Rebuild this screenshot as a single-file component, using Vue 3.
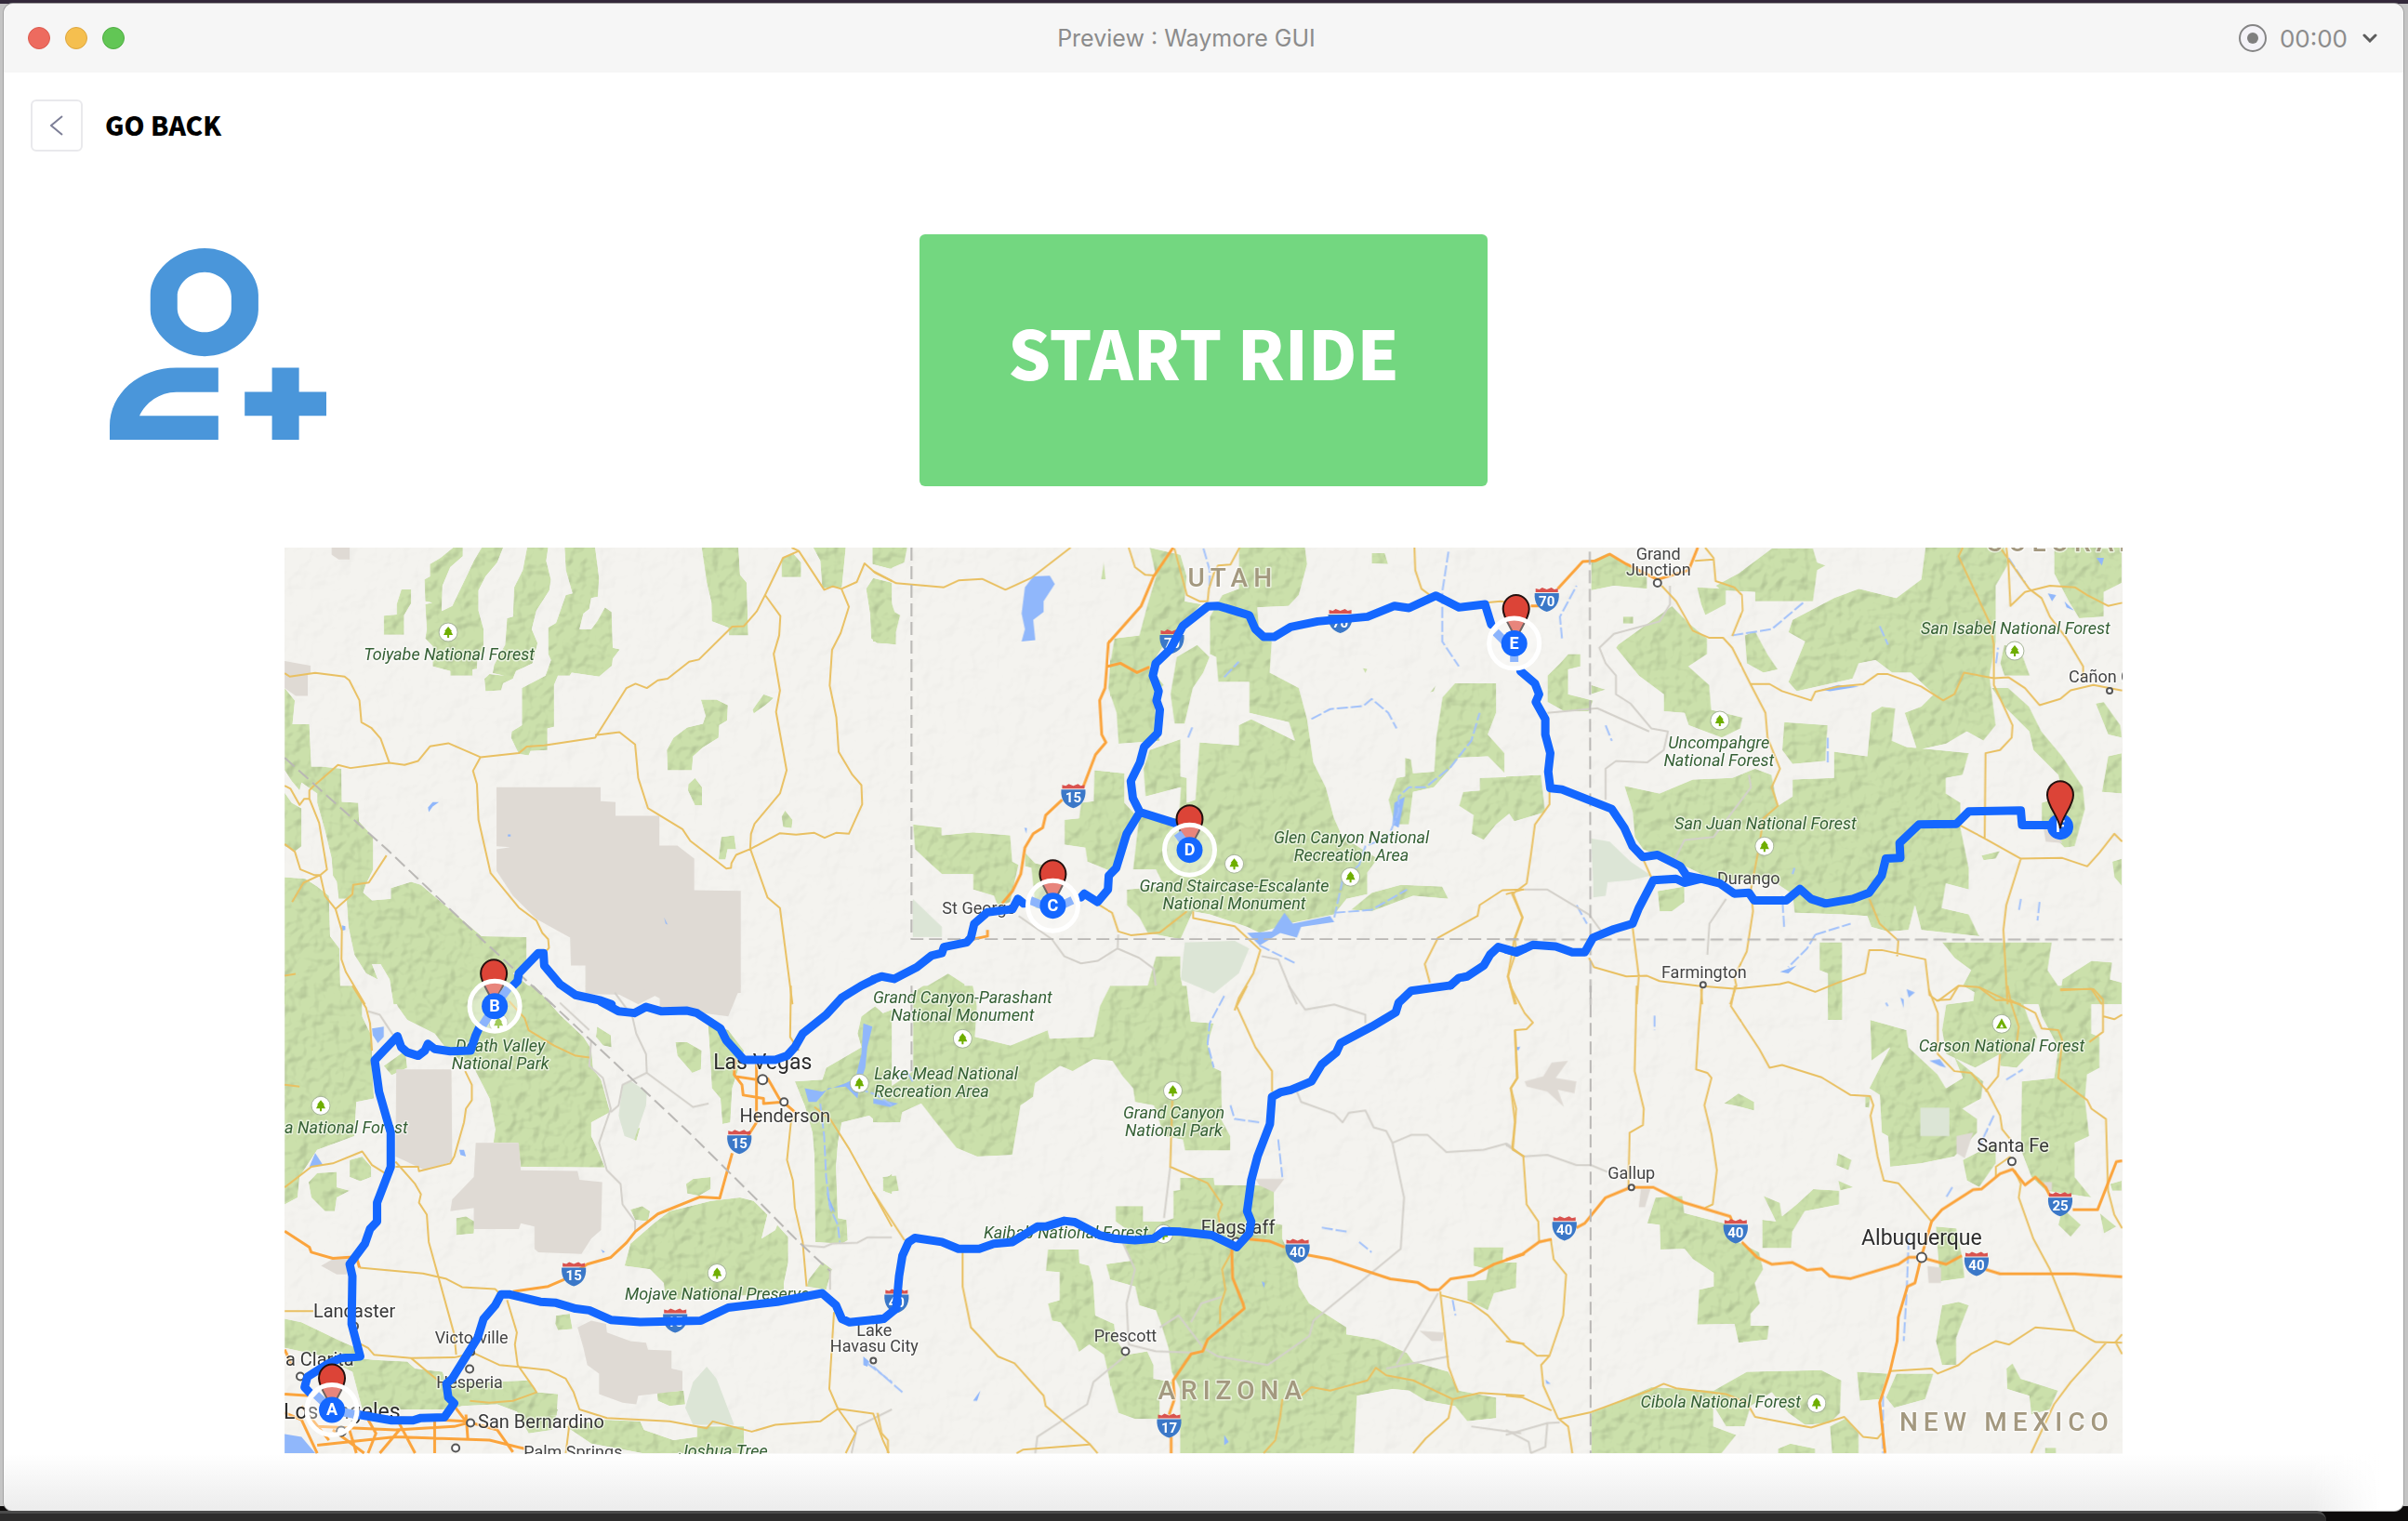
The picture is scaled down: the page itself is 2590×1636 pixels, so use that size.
<script setup>
// Vector tiles of the base map: origin (x, y), scale (sx, sy) and path data per layer.
const A = 1 / 2.3758
const B = 1 / 2.24
const C = 1 / 3
const D = 1 / 2.7222

const tiles = [
  {
    x: 300, y: 580, sx: A, sy: C,
    park: 'M270 247L303 243 303 210 315 162 340 162 340 207 322 245 322 308 270 308ZM415 60L447 27 472 27 472 55 440 90 420 150 418 232 445 215 482 118 500 70 520 27 575 27 560 75 530 120 512 165 512 230 525 290 525 370 510 380 508 418 497 420 497 440 440 440 440 425 395 410 395 345 376 320 380 290 376 210 394 205 376 200 374 130 388 120 388 80ZM636 27L690 27 685 70 697 130 693 165 660 230 648 290 663 335 650 400 608 425 600 450 575 465 570 487 530 490 527 450 540 435 578 440 548 432 552 405 580 340 585 255 600 250 603 155 625 100ZM732 27L810 27 820 125 817 185 800 190 795 225 780 240 770 290 800 290 815 265 835 220 852 235 855 350 873 355 855 385 853 408 820 443 750 430 745 440 715 440 705 470 705 605 688 610 688 680 645 683 640 697 615 693 595 640 597 620 623 600 623 480 683 440 697 390 690 370 690 285 710 270 735 180 752 175 735 100ZM1082 27L1176 27 1180 115 1197 140 1201 310 1152 310 1150 285 1108 265 1107 205 1095 140ZM1286 60L1315 45 1336 75 1336 122 1286 122ZM1367 27L1450 27 1440 155 1390 158 1385 70ZM1518 27L1568 27 1568 95 1518 80ZM1502 160L1520 125 1568 140 1568 337 1530 335 1515 320 1512 240ZM1080 517L1120 517 1149 535 1147 585 1127 600 1125 640 1085 672 1060 700 1057 745 995 745 993 680 1010 640 1045 607 1085 595 1092 570ZM1212 550L1240 500 1266 512 1245 535 1215 562ZM1048 790L1065 770 1083 800 1083 858 1065 858 1047 810ZM1286 895L1295 875 1314 905 1312 932 1290 928ZM1132 960L1165 955 1170 1000 1148 1000 1143 1033 1125 1033ZM17 480L43 520 37 597 80 597 85 733 110 733 162 740 163 847 205 850 207 910 243 960 243 1065 225 1112 212 1160 155 1160 150 1105 140 1085 137 1030 120 940 100 850 100 820 60 785 55 810 35 780 17 745ZM17 818L35 850 60 868 60 990 45 1005 17 990ZM17 1090L70 1095 100 1120 130 1150 133 1280 157 1320 160 1500 17 1500ZM192 1110L240 1165 288 1160 288 1125 340 1105 365 1115 520 1280 635 1283 635 1380 600 1400 700 1500 295 1500 285 1420 262 1370 240 1370 255 1420 225 1400 195 1340 180 1250 175 1160Z',
    base: 'M558 800L824 800 824 845 862 848 862 892 974 892 974 988 1020 988 1063 1030 1063 1132 1182 1134 1182 1463 1152 1465 1152 1510 975 1510 975 1465 920 1500 870 1468 785 1465 785 1375 748 1375 746 1285 660 1225 600 1150 558 1070 558 1000 593 993 558 990ZM17 393L83 408 83 435 76 435 76 505 45 505 17 480ZM137 27L183 27 183 65 155 65 137 50Z',
    pale: '',
    lake: 'M385 880L383 865 395 848 411 848 395 862ZM986 1220L995 1243 990 1240ZM163 1245L172 1248 172 1260 163 1262ZM587 952H594V959H587Z',
    river: '',
    minor: '',
    road: 'M17 432L30 443 95 431 170 443 182 455 208 520 213 590 238 608 262 643 284 720M90 797L153 728 185 738 284 721 323 728 358 715 388 668 435 658 517 703 615 690 635 669 680 665 810 640 890 480 913 466 942 480 970 455 995 450 1050 395 1075 388 1160 282 1190 280 1223 232 1244 180 1290 60 1330 38 1312 27M517 703L498 747 508 790 512 905 543 1077 615 1188 660 1230 675 1270 690 1290 692 1318 680 1335M810 632L872 622 912 662 920 770 945 868 1033 935 1053 973 1145 1062 1157 1060 1158 1045 1170 1018 1208 998 1282 948 1323 953 1370 947 1396 963 1425 947 1458 950 1492 855 1490 793 1467 760 1432 686 1426 575 1409 472 1415 357 1437 303 1458 218 1439 160 1417 152 1395 163 1330 38M1439 160L1478 138 1498 78 1525 108 1568 135M1244 180L1283 248 1280 310 1266 370 1282 488 1272 557 1299 745 1282 820 1217 918 1208 950 1206 998 1250 1155 1282 1190 1314 1500M17 795L32 805 55 857 67 837 80 837 80 810 90 797M80 837L105 915 125 1065 108 1083 120 1150 147 1193 163 1262 162 1355 173 1395 222 1500M17 983L43 1008 57 1065 92 1083 108 1083 65 1108 36 1170M147 1193L190 1145 192 1115 232 1107 277 1020M17 1408L45 1402',
    highway: '',
    border: 'M17 705L278 1000 520 1290 700 1500',
    route: 'M852 1500L825 1488 760 1470 720 1435 680 1375 678 1335 665 1335 615 1400 612 1425 600 1440',
  },
  {
    x: 300, y: 1060, sx: A, sy: D,
    park: 'M17 0L190 0 215 40 215 90 240 150 240 230 245 330 200 340 195 440 160 455 100 480 55 560 50 620 17 640ZM270 235L325 190 330 240 290 262ZM78 575L100 548 150 545 150 590 183 600 150 620 145 660 120 660 85 620ZM183 510L215 500 238 530 238 560 210 572 183 560ZM290 0L655 0 720 85 780 150 800 185 805 245 825 275 848 370 800 400 800 440 820 490 835 532 620 530 612 460 550 460 555 420 540 330 500 240 440 200 400 140 330 100 305 60ZM455 680L480 675 502 690 500 725 455 730ZM815 120L850 145 852 180 830 175 812 150ZM1015 165L1045 165 1082 190 1080 245 1058 255 1020 205ZM1098 105L1150 130 1190 190 1180 230 1160 300 1155 400 1135 405 1130 330 1108 300 1105 230ZM1568 70L1545 80 1525 60 1490 90 1480 140 1490 180 1400 240 1390 275 1320 280 1345 350 1365 430 1370 500 1372 750 1440 755 1455 745 1452 685 1430 680 1425 530 1430 460 1440 400 1510 380 1530 400 1568 400ZM885 430L925 415 915 455ZM1042 580L1060 565 1105 560 1105 595 1075 615 1045 608ZM900 655L930 645 950 660 945 690 912 685ZM1105 630L1180 620 1215 630 1250 670 1235 740 1270 715 1275 700 1303 735 1303 810 1292 870 1292 900 990 920 985 870 950 830 885 820 900 755 960 695 1000 660 1070 640ZM1355 860L1390 808 1415 830 1400 890 1350 880ZM710 965L745 960 752 1005 715 1008 708 990ZM968 1190L1036 1185 1040 1225 1000 1230 970 1215ZM1545 570L1568 550 1568 610 1545 600ZM17 975L60 985 160 1040 200 1060 205 1090 245 1095 330 1100 350 1120 420 1130 430 1160 470 1160 540 1160 640 1155 662 1190 715 1195 712 1258 640 1260 560 1225 470 1230 440 1240 320 1240 215 1240 190 1130 100 1080 17 1060ZM735 1290L830 1270 925 1275 935 1300 1010 1330 1070 1320 1070 1290 1190 1290 1190 1368 930 1368 800 1340ZM600 1225L680 1235 715 1240 700 1300 640 1310Z',
    base: 'M302 245L443 245 445 515 375 540 320 510 300 500ZM505 460L615 460 620 540 765 542 770 568 828 575 825 715 800 740 775 785 665 780 655 770 655 705 620 695 615 712 500 712 500 650 440 660 445 625 500 560ZM765 1000L800 980 838 990 840 1015 900 1040 940 1045 945 1065 1005 1068 1005 1120 1033 1128 1033 1185 920 1200 915 1225 880 1220 820 1195 820 1135 790 1110 780 1060ZM785 0L1182 0 1150 90 1050 75 980 40 930 10 920 25 790 25ZM110 820L140 800 180 800 175 845 150 845Z',
    pale: 'M880 290L900 278 942 310 940 350 910 450 885 440 870 380ZM1040 1235L1060 1160 1095 1115 1120 1150 1165 1285 1060 1285Z',
    lake: 'M240 125L270 120 270 150 255 168 242 145ZM17 1312L60 1320 95 1368 17 1368ZM1495 110L1518 120 1505 180 1500 240 1485 290 1480 330 1450 295 1405 300 1375 340 1355 340 1345 300 1390 310 1450 285 1475 270 1490 200ZM1400 600L1424 665 1408 645ZM80 530L95 490 115 525ZM463 480L475 480 480 500 466 495ZM825 772L835 778 830 782ZM1495 1085L1510 1100 1505 1115 1495 1110Z',
    river: 'M1480 300L1530 320 1568 350M1385 345L1395 440 1400 560 1410 650 1430 700 1435 750M1505 1105L1568 1160',
    minor: 'M230 75L260 85 280 120 300 155M800 160L795 235 830 270 850 360 820 460 840 540 875 580 880 640 912 690 912 720M720 50L795 130M860 20L905 90 915 140 940 200 942 255 1060 355 1100 345M942 255L880 290 870 350 850 370M1340 760L1395 765 1415 755 1480 752 1505 737 1568 737M1568 1240L1480 1290 1465 1368M1410 830L1410 890',
    road: 'M190 0L225 65 235 110 240 190M590 45L630 95 640 130 705 175 760 205 795 210M478 250L495 290 495 335 480 360 475 400 450 500 440 520 360 543 358 530 300 530M17 590L85 530 140 520 215 485 240 525 275 550M17 290L55 295M300 515L350 580 365 610 360 635 380 670 385 750 450 1020 455 1080M208 825L370 842 430 858 470 882 555 888 565 900M585 920L610 1015 605 1050 612 1110 655 1180 660 1190 600 1215 540 1220 490 1215M17 952L90 952M205 1045L230 1060 245 1080 340 1090 450 1088 500 1075 565 1110 610 1115 690 1125 735 1150 755 1190 770 1240 840 1265 1000 1275 1095 1295 1110 1275 1210 1305 1270 1285 1385 1275 1430 1238 1520 1252 1545 1330 1560 1368M340 1090L435 1180M1420 955L1408 1180 1430 1238 1475 1310 1450 1368M1310 0L1308 150 1330 190M1330 370L1310 400 1300 510 1315 570 1320 650 1340 750 1350 880M1370 355L1410 390 1460 480 1568 705M735 1368L745 1275',
    highway: 'M17 718L80 765 85 780 140 798 200 793 208 825M1160 490L1128 622 1078 618 970 668 912 720 890 752 850 795 790 815 730 860 690 880 600 895M1168 215L1165 260 1185 290 1188 320 1240 330 1240 345 1290 340M1222 225L1222 400 1200 440M1165 265L1222 275M1250 270L1280 330 1320 370M17 1195L80 1200M17 1065L35 1110M230 1260L480 1275 560 1300 600 1365M100 1290L300 1300 450 1290 500 1275M180 1290L200 1368M230 1368L250 1310 230 1270M300 1260L350 1368M400 1270L400 1368M140 1300L220 1368M260 1368L310 1300M100 1345L300 1320 540 1330 630 1355M450 1230L480 1275M480 1255L485 1330M17 1250L60 1270 100 1368M60 1230L130 1330',
    border: 'M650 0L1050 430 1200 600 1330 750 1410 835',
    route: 'M825 47L870 75 910 80 940 62 980 75 1045 73 1070 80 1130 125 1145 160 1190 217 1270 217 1300 205 1320 180 1340 140 1400 85 1440 35 1490 0 1522 -18M515 120L505 145 492 190 440 192 400 185 383 170 375 190 358 205 330 195 315 180 305 148 270 190 247 218 258 310 288 430 288 530 253 635 253 690 235 712 222 755 183 815 190 850 188 990 210 1085 160 1090 130 1105 75 1145 68 1175 82 1192M205 1255L290 1272 345 1272 365 1265 425 1263 450 1222 435 1205 430 1165 445 1150 510 1030 525 975 555 935 570 903 590 903 670 925 710 928 760 945 795 950 850 978 925 984 1080 980 1150 942 1275 925 1390 900 1425 935 1440 975 1460 985 1545 975',
  },
  {
    x: 940, y: 580, sx: B, sy: C,
    park: 'M0 27L82 27 75 75 40 95 0 80ZM0 125L30 150 52 235 65 245 55 300 55 340 0 330ZM665 27L740 50 755 120 750 200 790 210 700 340 665 415 700 470 675 500 680 560 690 650 590 660 585 560 565 480 570 400 580 320 640 310 660 210 680 120ZM880 27L1040 27 1045 80 1025 180 1000 215 925 220 930 300 960 330 955 430 1025 480 1045 580 1060 720 1090 800 1110 900 1130 960 1190 1010 1215 1030 1190 1075 1190 1145 1140 1160 1110 1210 1000 1240 930 1270 900 1250 810 1210 770 1200 740 1290 660 1270 640 1220 610 1180 610 1130 700 1120 680 1065 625 1065 640 890 735 900 740 800 655 830 650 740 665 680 740 645 740 765 755 770 755 850 775 840 785 655 880 665 880 600 910 580 1015 650 1000 590 905 560 905 460 830 460 825 380 810 370 810 250 840 180 880 160ZM730 380L780 340 810 380 795 430 770 480 750 595 725 595 715 500ZM532 745L605 755 605 850 640 900 600 1010 570 1070 515 1040 510 995 460 985 460 905 495 900 500 850 530 845ZM95 920L165 930 165 955 240 945 330 955 335 1040 350 1050 330 1170 300 1185 290 1150 240 1130 240 1080 165 1080 140 1050 100 1000ZM365 1010L390 1045 440 1060 440 1200 390 1190 380 1060 365 1055ZM1200 45L1232 45 1240 80 1200 78ZM1400 465L1500 465 1500 560 1480 630 1520 690 1520 755 1480 700 1410 705 1390 740 1350 800 1300 815 1290 920 1255 920 1240 840 1260 770 1280 765 1280 705 1295 710 1300 755 1350 750 1355 640 1370 510ZM1460 770L1568 765 1568 880 1545 870 1500 920 1470 970 1440 950 1445 890 1410 860 1420 815 1460 810ZM1200 1140L1270 1115 1370 1120 1385 1160 1300 1150 1200 1200 1150 1195ZM680 1345L740 1345 740 1410 755 1510 550 1510 570 1445 660 1440ZM130 1440L180 1400 220 1435 220 1460 160 1470ZM548 130L555 70 560 130ZM1340 495L1355 470 1350 490ZM1178 415L1190 418 1185 433Z',
    base: '',
    pale: 'M750 1300L870 1295 905 1320 880 1400 820 1465 740 1420ZM95 1160L165 1250 165 1283 95 1283Z',
    lake: 'M385 120L425 118 437 145 410 200 410 235 385 260 390 325 357 330 365 290 357 240 365 155ZM900 1270L960 1265 990 1205 1010 1240 1100 1215 1110 1235 1030 1250 1020 1285 980 1270 930 1310ZM1255 850L1280 830 1265 930 1250 920ZM364 930L370 932 368 950Z',
    river: 'M1110 1220L1130 1100 1170 1050 1185 990 1240 960 1265 880 1265 830 1290 800 1330 800 1390 735 1440 650 1460 560M1110 1205L1200 1195 1285 1130M845 445L880 395M758 640L770 600M1055 580L1100 548 1180 538 1200 515 1240 560 1260 610M1385 40L1370 170 1370 330 1410 410M795 30L810 100 810 150M930 1310L1020 1370',
    minor: 'M590 1275L588 1320 540 1360 500 1368 460 1345 430 1290 350 1215M588 1320L640 1350 675 1385 680 1440M935 1345L975 1355 1010 1470 1020 1500',
    road: 'M0 103L55 142 170 155 205 133 262 128 318 163 380 125 475 27M615 27L630 90 655 115 680 117M725 30L755 180 785 200 805 200 808 160 820 110 830 85 860 82 882 27M1303 27L1305 100 1320 160 1340 180M545 1180L575 1205 590 1265 620 1277 690 1268 755 1200M770 1200L770 1222 870 1248 932 1325 915 1400 880 1480 870 1520M1568 1130L1515 1132 1460 1180 1455 1215 1360 1285 1328 1370 1340 1430M1540 1140L1563 1220 1545 1290 1548 1330 1528 1410 1545 1500M1475 205L1510 200 1535 205',
    highway: 'M722 27L675 120 645 215 566 335 562 415 558 480 545 520 550 630 560 655 535 695 505 800M455 840L415 890 408 930 385 950 365 995 355 1080 335 1135 310 1175M565 410L595 400 635 430 665 412M275 1260L275 1280 240 1290',
    border: 'M92 27L92 1290L1568 1290',
    route: 'M0 1420L20 1410 50 1418 105 1380 140 1343 165 1335 170 1315 225 1300 235 1285 243 1240 275 1203 335 1193 348 1160 362 1175M500 1155L508 1143 540 1170 565 1130 567 1085 585 1060 610 950 642 880 625 835 620 780 642 720 652 670 685 625 690 550 682 520 687 490 673 440 680 400 715 355 745 280 805 217 830 215 880 235 905 245 920 290 940 315 965 315 1005 283 1070 265 1190 250 1255 215 1290 222 1355 182 1410 220 1473 210 1488 275M642 880L725 915M1390 1439L1410 1415 1430 1410 1470 1375 1485 1340 1505 1315 1545 1330 1568 1320',
  },
  {
    x: 940, y: 1060, sx: B, sy: D,
    park: 'M95 20L120 0 240 0 250 60 245 150 330 175 420 130 425 155 530 150 545 60 570 0 755 0 765 105 820 110 805 170 820 240 838 250 840 395 860 440 860 482 750 482 745 450 700 440 675 350 630 340 625 300 600 265 575 220 530 215 480 250 450 235 390 285 385 325 355 350 335 495 250 500 200 475 150 400 115 345 70 370 65 400 0 400 0 330 95 250ZM583 645L650 645 650 690 700 690 722 680 722 600 738 598 738 562 820 562 822 583 965 585 965 695 985 700 985 740 1020 830 1025 880 1050 930 1140 1000 1140 1020 1215 1035 1285 1075 1300 1100 1385 1130 1410 1185 1500 1205 1500 1265 1430 1275 1400 1230 1330 1215 1290 1185 1250 1180 1165 1200 1158 1368 738 1368 738 1180 718 1130 710 1060 695 1000 680 950 640 935 630 880 570 860 560 815 620 805 600 750 640 740 583 690ZM535 965L580 990 585 1035 610 1080 660 1070 675 1110 675 1150 720 1160 715 1190 690 1200 690 1268 630 1268 590 1250 570 1165 555 1080 520 1050 495 1072 485 1040 450 985 430 980 420 930 448 920 448 838 415 835 420 772 495 772 497 812 520 820 530 870ZM1445 765L1518 765 1515 810 1550 810 1545 885 1495 900 1480 950 1430 920 1430 865 1475 860 1480 830 1445 820ZM22 560L55 555 62 600 30 605ZM0 115L15 130 10 190 0 200Z',
    base: 'M920 565L990 565 965 605 930 585ZM1315 1010L1375 1015 1370 1040 1345 1040Z',
    pale: '',
    lake: 'M845 1315L856 1335 845 1345ZM935 865L943 870 941 885ZM240 1215L258 1185 250 1215ZM0 330L60 345 40 355 0 345ZM1545 178L1556 180 1550 190Z',
    river: 'M1395 920L1402 965M1170 750L1200 780M845 30L810 110 805 170 820 240M860 350L870 390 930 400M975 450L985 560M1080 708L1140 720M0 1115L70 1190M60 270L80 250 95 280',
    minor: 'M715 530L700 680M1000 0L1040 70 1110 55 1185 85 1185 110M1020 310L1030 340 1110 375 1130 400 1145 372 1185 365 1205 415 1235 425 1250 460 1295 437 1335 437 1380 487 1470 480 1525 462 1540 475M1250 460L1278 620 1270 770 1170 870 1060 980 1050 1025 950 1110 830 1085 795 1060 735 965 690 1000M1260 1108L1360 900M1235 1120L1385 1085M600 750L630 830 610 930 615 1050 680 1070 790 1075M610 1080L530 1160 515 1225 395 1320 390 1368M765 985L790 930 840 910M1440 1290L1560 1310',
    road: 'M900 0L875 60 920 180 960 250 960 310M720 335L715 530 805 578 840 640 830 670 835 700M0 605L75 745M215 780L215 880 235 1000 300 1085 340 1105 410 1200 415 1230 520 1340 540 1368M345 1368L360 1358 520 1343M835 990L835 940 848 890 840 830 865 775M940 1368L968 1330 980 1260 985 1210M1030 1200L1055 1175 1100 1185 1190 1155 1210 1118 1235 1140 1300 1155 1395 1210 1460 1192 1568 1200M1395 1210L1385 1265 1330 1325 1300 1368M1365 895L1385 1115 1408 1190M1365 905L1440 930 1480 965 1535 1040 1568 1048M1545 130L1550 270 1535 300 1548 360 1540 480 1568 500M10 1250L20 1310 35 1330 35 1368',
    highway: 'M905 742L955 748 990 765M1045 788L1100 800 1245 858 1310 868 1340 890 1362 890 1390 858 1445 848 1495 815 1568 785M863 770L865 855 890 930 893 945 805 1035 793 1070 765 1078 722 1155 725 1210 712 1255M717 1320L717 1368',
    border: 'M92 0L92 250',
    route: 'M0 978L25 975 55 945 62 850 70 790 85 750 100 738 165 750 205 770 255 770 290 755 335 750 395 705 415 705 460 688 485 692 545 730 580 740 630 745 675 740 700 718 740 720 780 725 815 730 875 765 905 725 910 690 900 660 910 570 925 500 955 405 960 325 980 312 1005 305 1055 280 1080 230 1115 195 1125 168 1200 120 1258 78 1265 50 1295 15 1390 -1',
  },
  {
    x: 1620, y: 580, sx: B, sy: C,
    park: 'M205 70L245 45 290 80 340 120 340 160 260 150 205 165ZM270 340L400 215 440 270 485 320 485 370 440 410 490 470 495 550 570 575 565 610 520 640 440 600 430 560 380 555 380 500 320 440 265 350ZM505 150L560 110 640 30 740 30 750 75 770 85 750 100 740 200 600 200 600 170 520 165ZM460 155L530 160 530 210 480 245 470 210ZM1010 27L1200 27 1210 80 1180 150 1180 330 1165 440 1180 600 1150 650 1110 620 1060 660 990 680 970 600 960 560 1000 540 1030 500 975 430 930 430 890 390 850 400 835 450 700 490 680 460 720 330 680 300 690 260 790 190 850 160 940 190 1000 130ZM575 310L600 295 630 370 655 420 620 430 580 400ZM1320 27L1484 27 1484 140 1440 170 1440 250 1380 255 1355 200 1320 110ZM1190 400L1200 340 1240 360 1262 440 1200 440ZM1170 480L1210 480 1260 540 1290 620 1340 700 1390 800 1395 870 1370 990 1345 995 1290 920 1290 850 1340 830 1330 760 1270 680 1260 620 1200 540ZM1420 530L1440 525 1480 600 1484 640 1450 630ZM1450 700L1484 690 1484 820 1435 815ZM670 590L775 600 770 715 690 725 665 680ZM285 795L370 820 450 775 545 770 600 740 640 760 655 860 690 830 690 775 790 770 790 685 870 700 880 560 905 540 938 545 930 650 965 670 1115 690 1100 760 1060 770 1060 820 1095 850 1095 930 1115 1060 1115 1130 1060 1110 1050 1190 1115 1210 1140 1280 1000 1260 985 1180 970 1260 920 1265 880 1250 870 1215 810 1210 695 1205 690 1145 640 1100 500 1100 440 1060 330 1000 310 960 305 880ZM365 1135L430 1120 430 1170 400 1200 370 1200ZM755 1300L810 1300 810 1510 775 1510 775 1400 755 1390ZM1050 1300L1315 1300 1305 1390 1330 1440 1300 1500 1180 1500 1100 1440 1120 1390 1080 1350ZM1340 1420L1410 1360 1460 1365 1455 1420 1484 1430 1484 1500 1330 1500ZM100 440L130 400 150 370 180 370 180 410 150 420 150 500 210 520 200 555 140 555 100 525ZM0 765L85 760 95 880 20 910 0 870ZM1145 1020L1190 1005 1180 1030 1150 1035ZM282 250H307V272H282ZM1460 1040L1484 1030 1484 1120 1465 1090ZM205 470L240 485 205 500Z',
    base: 'M1295 935L1320 925 1340 980 1300 975Z',
    pale: 'M205 965L250 975 300 1040 350 1085 300 1100 210 1110ZM210 1110L245 1105 240 1150 210 1155Z',
    lake: 'M1305 175L1325 180 1315 200ZM1345 200L1368 230 1350 220ZM760 485L800 470 850 475 780 490ZM1422 60L1440 60 1435 85ZM660 1395L700 1375 680 1400Z',
    river: 'M745 1275L725 1320 680 1380M690 1080L695 1060M670 1250L665 1150M745 1275L830 1240M135 320L130 250 170 150M545 310L640 290 720 200M775 720L775 640M900 280L920 340M1180 400L1185 350M1210 60L1250 140M240 600L255 650M170 1180L195 1240M1285 1170L1280 1230M1240 1160L1235 1200',
    minor: 'M395 150L395 210 370 265 260 305 225 350 240 400 265 440 265 500 300 530 350 610 390 620 380 680 340 720 265 715 240 740 240 840M100 560L220 545 345 620M585 760L590 800 500 960 430 970 400 1050M530 1160L490 1240 485 1340M45 1130L100 1130 200 1210 230 1265',
    road: 'M375 150L410 200 450 295 490 318 523 318 545 350 590 470 625 560 630 640 660 740 640 800 655 860 620 900 610 990 590 1130 595 1200 580 1330 550 1410 555 1440 540 1500M480 27L500 60 505 135 550 155 568 180 570 230 545 312M455 70L500 65M590 467L635 467 665 490 735 520 745 492 800 475 860 468 895 435 920 435 1000 475 1053 520 1080 500 1103 430 1175 448 1210 445 1250 480 1285 535 1335 515 1360 487 1415 470 1484 488M1100 27L1090 55 1165 270 1175 340 1175 470 1220 600 1218 640 1190 680 1155 690 1153 965 1240 1030 1205 1180 1198 1260 1208 1500M1205 27L1210 80 1215 215 1250 170 1310 150 1370 155 1400 180 1450 215 1484 205M1190 27L1260 160 1290 190 1310 250 1350 320 1390 410 1390 450M1090 920L1153 965M1240 1030L1340 1028 1400 1055 1430 1010 1465 950 1484 975M105 815L105 855 70 920 60 1020 50 1110 15 1145 40 1220 20 1290 5 1410 25 1500M0 1145L40 1130M330 1030L350 1090M305 1250L320 1410 315 1500M200 1350L212 1380 290 1410 340 1408 370 1425 460 1440 550 1450 660 1435 680 1428 745 1460 800 1430 865 1400 875 1325 905 1325 1010 1355 1020 1470 1040 1490M875 1160L900 1240 945 1295 942 1345M470 1450L473 1500M1040 1490L1090 1440 1140 1445 1210 1490 1240 1500M1335 1455L1410 1450 1435 1500',
    highway: 'M60 215L80 215M125 160L185 72 215 70 250 48 290 80 365 130 440 100 462 27',
    border: 'M202 40L204 1500M0 1291L1484 1291',
    route: 'M35 425L70 465 80 500 72 525 95 580 95 630 107 690 102 750 107 803 135 807 255 870 285 930 305 990 330 1025 365 1018 420 1055 435 1085 470 1095 515 1110 550 1143 585 1140 598 1165 675 1165 708 1128 735 1160 770 1175 835 1160 875 1140 905 1085 915 1030 950 1028 948 980 995 920 1085 918 1115 878 1240 875 1243 922 1330 922M0 1323L25 1333 65 1308 120 1313 160 1332 190 1332 210 1285 260 1258 305 1240 320 1190 355 1100 410 1095 430 1108 470 1095',
  },
  {
    x: 1620, y: 1060, sx: B, sy: D,
    park: 'M775 0L810 0 810 100 775 100ZM1060 55L1125 45 1130 0 1200 0 1240 30 1260 100 1280 150 1270 190 1230 240 1190 235 1190 200 1130 240 1060 200 1050 130ZM1270 0L1484 0 1484 20 1410 30 1410 140 1430 150 1430 240 1400 260 1395 330 1405 440 1370 460 1370 560 1410 620 1300 600 1265 560 1240 480 1242 280 1320 270 1330 180 1290 90ZM877 100L965 130 970 180 1040 260 1060 300 1100 270 1080 210 1150 280 1145 330 1100 360 1135 390 1135 430 1080 500 1000 520 925 530 920 440 905 430 900 320 875 300 925 180 880 220ZM1100 510L1180 460 1180 520 1140 590 1110 570ZM525 345L560 315 598 340 598 365 550 350ZM800 490L833 510 825 540 795 525ZM620 615L660 635 665 675 700 640 740 595 805 600 800 570 837 590 803 600 803 640 720 660 690 720 687 768 617 768 617 685 650 690ZM360 620L425 615 430 665 540 700 560 750 610 780 620 830 600 870 612 930 590 960 590 995 634 995 630 1035 560 1045 550 990 460 992 465 890 500 880 500 840 450 800 430 770 372 772 370 700 340 695ZM0 812L25 812 25 885 0 885ZM205 1250L350 1175 500 1185 580 1130 760 1125 808 1155 805 1250 780 1280 720 1285 680 1250 640 1190 590 1230 575 1290 530 1290 500 1230 500 1290 555 1315 520 1368 205 1368ZM845 1130L920 1135 900 1210 852 1215ZM940 1135L1030 1135 1010 1210 935 1235 915 1205ZM1050 935L1090 925 1115 935 1085 1030 1085 1110 1050 1110 1035 1040ZM1035 705L1085 710 1100 800 1105 855 1045 865ZM780 1290L820 1265 850 1310 850 1368 785 1368ZM655 1355L685 1340 745 1355 745 1368 655 1368ZM1205 1120L1220 1105 1240 1150 1330 1185 1310 1240 1265 1255 1260 1200 1207 1180ZM1340 650L1385 700 1360 735 1330 700ZM1430 665L1470 705 1440 725ZM1298 1352H1325V1368H1298ZM1455 580L1484 570 1484 600 1460 600ZM865 325L878 325 875 358 865 355Z',
    base: 'M1015 820L1048 825 1048 870 1018 870ZM1085 440L1125 430 1105 505 1085 490ZM325 595L348 595 335 648 320 648ZM45 280L90 265 110 225 150 220 120 270 170 280 165 315 125 305 140 355 100 310 50 295ZM1295 575L1315 575 1315 600 1300 600Z',
    pale: 'M998 357L1068 357 1068 440 998 440Z',
    lake: 'M965 10L985 20 970 35ZM1020 220L1045 215 1060 240 1045 235ZM22 182L35 178 30 190ZM95 1152L108 1165 98 1165ZM950 35L958 40 958 65Z',
    river: 'M358 88V130M970 740L965 900 958 1040M1075 590L1060 620M1175 380L1140 470M1205 275L1245 245M908 1200V1368M915 50L920 60',
    minor: 'M0 465L42 500 100 495 170 525 205 525 245 545M0 1315L100 1280 130 1278M100 1280L95 1350 60 1368M0 1300L55 1335 60 1368',
    road: 'M10 0L45 80 65 108 50 127 22 130 28 270 12 300 22 400 15 475 42 500 50 640 78 690 80 750 108 742 115 800 145 845 138 965 105 1083 85 1110 90 1170 125 1265 150 1290 160 1368M0 1040L40 1048 75 1083 105 1083M0 1200L40 1205 110 1243M130 1268L205 1248 345 1185 380 1165 410 1178 530 1195 580 1220 600 1262 735 1293 815 1262 860 1320 895 1325 905 1310M315 0L310 250 332 360 330 408 298 430 295 590M473 0L465 110 458 245 485 255 495 270 478 350 495 435 508 540 498 640 480 650M552 0L542 60 610 185 635 240 665 232 760 268 830 320 877 323 885 350 878 380 895 500 910 570 945 578 990 640 1025 690M1018 10L1040 80 1040 200 1080 250 1120 255 1160 310 1190 380 1195 420 1215 450M1208 0L1215 45 1235 120 1230 170M1190 200L1185 265 1155 310M1090 0L1070 40 1040 42M1140 5L1180 42 1215 42 1275 80 1290 125 1330 130 1340 160 1330 270 1400 335 1410 360 1445 390 1450 600 1465 670 1484 710M1335 10L1415 10 1438 40 1438 135 1405 165M1440 90L1465 98 1484 85M1180 560L1180 530 1215 500M1225 540L1240 580 1235 620 1270 740 1310 830 1370 1010 1420 1043 1484 1045M1445 1045L1360 1160 1320 1225 1265 1368M1484 1020L1468 1043 1484 1078M925 1128L1025 1120 1040 1135 1090 1110 1120 1078 1180 1040 1212 1050 1275 1000 1370 1010',
    highway: 'M0 802L40 785 80 750 110 742M170 708L190 695 240 620 300 590 355 590 430 635 540 675 545 690M568 750L605 795 640 815 690 810 725 832 760 828 780 850 830 857 945 815 970 795 1000 795 1060 815 1098 790M1155 830L1190 843 1370 843 1484 852M1025 690L1050 655 1125 597 1145 595 1190 550 1220 537 1250 583 1275 560 1300 590 1310 615M1365 655L1425 655 1470 515 1484 512M1025 690L1000 795 985 870 967 880 945 970 942 1040 925 1128 900 1220 913 1368',
    border: 'M204 0V1368',
    route: '',
  },
]

const layers = ['base', 'pale', 'lake', 'river', 'minor', 'road', 'highway', 'border']
const place = (t) => `translate(${t.x} ${t.y}) scale(${t.sx} ${t.sy})`

// kind, x, first baseline, lines, anchor
const labels = [
  ['state', 1278, 631, ['UTAH'], 'start'],
  ['state', 1246, 1505, ['ARIZONA'], 'start'],
  ['state', 2043, 1539, ['NEW MEXICO'], 'start'],
  ['state', 2136, 593, ['COLORADO'], 'start'],
  ['nature', 484, 710, ['Toiyabe National Forest'], 'middle'],
  ['nature', 2168, 682, ['San Isabel National Forest'], 'middle'],
  ['nature', 1849, 805, ['Uncompahgre', 'National Forest'], 'middle'],
  ['nature', 1899, 892, ['San Juan National Forest'], 'middle'],
  ['nature', 2153, 1131, ['Carson National Forest'], 'middle'],
  ['nature', 1851, 1514, ['Cibola National Forest'], 'middle'],
  ['nature', 1454, 907, ['Glen Canyon National', 'Recreation Area'], 'middle'],
  ['nature', 1328, 959, ['Grand Staircase-Escalante', 'National Monument'], 'middle'],
  ['nature', 1036, 1079, ['Grand Canyon-Parashant', 'National Monument'], 'middle'],
  ['nature', 941, 1161, ['Lake Mead National', 'Recreation Area'], 'start'],
  ['nature', 1263, 1203, ['Grand Canyon', 'National Park'], 'middle'],
  ['nature', 1147, 1332, ['Kaibab National Forest'], 'middle'],
  ['nature', 539, 1131, ['Death Valley', 'National Park'], 'middle'],
  ['nature', 307, 1219, ['a National Forest'], 'start'],
  ['nature', 772, 1398, ['Mojave National Preserve'], 'middle'],
  ['nature', 731, 1567, ['Joshua Tree'], 'start'],
  ['town', 1784, 602, ['Grand', 'Junction'], 'middle'],
  ['town', 2225, 734, ['Cañon City'], 'start'],
  ['town', 1881, 951, ['Durango'], 'middle'],
  ['town', 1833, 1052, ['Farmington'], 'middle'],
  ['town', 1755, 1268, ['Gallup'], 'middle'],
  ['town', 1014, 983, ['St George'], 'start'],
  ['town', 1211, 1443, ['Prescott'], 'middle'],
  ['town', 941, 1437, ['Lake', 'Havasu City'], 'middle'],
  ['town', 508, 1445, ['Victorville'], 'middle'],
  ['town', 506, 1493, ['Hesperia'], 'middle'],
  ['town', 564, 1568, ['Palm Springs'], 'start'],
  ['city', 2165, 1239, ['Santa Fe'], 'middle'],
  ['city', 1332, 1327, ['Flagstaff'], 'middle'],
  ['city', 845, 1207, ['Henderson'], 'middle'],
  ['city', 382, 1417, ['Lancaster'], 'middle'],
  ['city', 515, 1536, ['San Bernardino'], 'start'],
  ['city', 308, 1469, ['a Clarita'], 'start'],
  ['metro', 2067, 1339, ['Albuquerque'], 'middle'],
  ['metro', 821, 1150, ['Las Vegas'], 'middle'],
  ['metro', 306, 1526, ['Los Angeles'], 'start'],
]

const dots = [
  [821, 1161, 5], [844, 1185, 4], [506, 1472, 4], [507, 1530, 4], [491, 1557, 4], [324, 1480, 4],
  [368, 1539, 5], [940, 1463, 3], [1211, 1453, 4], [1783, 627, 4], [2269, 743, 3], [1832, 1059, 3],
  [1755, 1277, 3], [2164, 1249, 4], [2067, 1352, 5], [382, 1426, 4], [508, 1454, 3], [1330, 1335, 4],
]

const trees = [
  [483, 680], [346, 1189], [925, 1165], [772, 1369], [537, 1100], [1328, 929], [1453, 943], [1036, 1117],
  [1262, 1173], [1252, 1327], [2167, 700], [1850, 775], [1898, 910], [1954, 1509],
]

const shields = [
  [15, 1155, 856], [70, 1261, 690], [70, 1442, 668], [70, 1664, 645], [40, 1683, 1321], [40, 1867, 1324],
  [25, 2216, 1295], [40, 2126, 1359], [40, 965, 1399], [40, 1396, 1345], [17, 1258, 1533], [15, 796, 1228],
  [15, 618, 1370], [15, 727, 1420],
]

// Waypoints under a drop pin: letter, badge centre and pin head centre
const stops = [
  ['A', 358, 1516, 358, 1482], ['B', 533, 1082, 532, 1047], ['C', 1133, 974, 1133, 940],
  ['D', 1280, 914, 1280, 881], ['E', 1629, 692, 1631, 655],
]
const pin = 'M0 36C-1 24 -14 12 -14 0A14 15 0 0 1 14 0C14 12 1 24 0 36Z'
</script>

<template>
  <div class="desktop">
    <main class="window">
      <header class="titlebar">
        <div class="lights">
          <button class="light close" aria-label="Close"></button>
          <button class="light minimise" aria-label="Minimise"></button>
          <button class="light zoom" aria-label="Zoom"></button>
        </div>
        <h1 class="title">Preview : Waymore GUI</h1>
        <button class="recorder">
          <svg class="record" viewBox="0 0 30 30" aria-hidden="true">
            <circle cx="15" cy="15" r="14" fill="#f4f3f8" stroke="#858585" stroke-width="2" />
            <circle cx="15" cy="15" r="6" fill="#7f7f7f" />
          </svg>
          <span>00:00</span>
          <svg class="chevron" viewBox="0 0 16 10" aria-hidden="true">
            <path d="M2 2L8 8 14 2" fill="none" stroke="#5c5c5c" stroke-width="3" stroke-linecap="round" />
          </svg>
        </button>
      </header>

      <nav class="back-row">
        <button id="back" class="back" aria-label="Go back">
          <svg viewBox="0 0 14 22" aria-hidden="true">
            <path d="M13 1L1 11 13 21" fill="none" stroke="#7d7f97" stroke-width="2" />
          </svg>
        </button>
        <label for="back" class="back-label">GO BACK</label>
      </nav>

      <section class="actions">
        <button class="add-rider" aria-label="Add rider">
          <svg viewBox="115 80 698 619" preserveAspectRatio="none" aria-hidden="true">
            <path fill="#4a96da" fill-rule="evenodd" d="M421 80C518 80 594 160 594 230V280C594 350 518 429 421 429S246 350 246 280V230C246 160 323 80 421 80ZM421 157C373 157 333 196 333 235V275C333 313 373 351 421 351S507 313 507 275V235C507 196 467 157 421 157ZM465 466V545H330C275 545 230 580 211 622H465V699H115V655C115 550 210 466 330 466ZM638 466H725V544H813V622H725V699H638V622H550V544H638Z" />
          </svg>
        </button>
        <button class="start">START RIDE</button>
      </section>

      <svg class="map" viewBox="307 589 1976 974" role="img" aria-label="Route map">
        <defs>
          <filter id="relief" x="0" y="0" width="100%" height="100%" color-interpolation-filters="sRGB">
            <feTurbulence type="fractalNoise" baseFrequency="0.07" numOctaves="2" seed="4" result="n" />
            <feDiffuseLighting in="n" surfaceScale="5" diffuseConstant="1.15" lighting-color="#fff" result="l">
              <feDistantLight azimuth="225" elevation="60" />
            </feDiffuseLighting>
            <feComposite in="l" in2="SourceGraphic" operator="arithmetic" k1="0.2" k2="0" k3="0.8" k4="0" result="m" />
            <feComposite in="m" in2="SourceGraphic" operator="in" />
          </filter>
          <filter id="plain" x="0" y="0" width="100%" height="100%" color-interpolation-filters="sRGB">
            <feTurbulence type="fractalNoise" baseFrequency="0.04" numOctaves="3" seed="9" result="n" />
            <feDiffuseLighting in="n" surfaceScale="6" diffuseConstant="1.15" lighting-color="#fff" result="l">
              <feDistantLight azimuth="225" elevation="60" />
            </feDiffuseLighting>
            <feComposite in="l" in2="SourceGraphic" operator="arithmetic" k1="0.04" k2="0" k3="0.96" k4="0" />
          </filter>
        </defs>

        <rect x="307" y="589" width="1976" height="974" fill="#f4f3ef" filter="url(#plain)" />
        <g filter="url(#relief)">
          <path v-for="(t, i) in tiles" :key="i" class="park" :transform="place(t)" :d="t.park" />
        </g>
        <g v-for="layer in layers" :key="layer" :class="layer">
          <path v-for="(t, i) in tiles" :key="i" :transform="place(t)" :d="t[layer]" />
        </g>

        <circle v-for="(d, i) in dots" :key="i" class="dot" :cx="d[0]" :cy="d[1]" :r="d[2]" />

        <g v-for="(t, i) in trees" :key="i" :transform="`translate(${t[0]} ${t[1]})`">
          <circle class="poi" r="10" />
          <path fill="#6fae00" d="M0 -6L4 -1 3 -1 5 3H1V6H-1V3H-5L-3 -1-4 -1Z" />
        </g>
        <g transform="translate(2153 1101)">
          <circle class="poi" r="10" />
          <path fill="#6fae00" fill-rule="evenodd" d="M0 -6L6 5H-6ZM0 0L-2 4H2Z" />
        </g>

        <g v-for="(s, i) in shields" :key="i" :transform="`translate(${s[1]} ${s[2]})`">
          <path fill="#d9534f" d="M-12 -12L-8 -11 -5 -13 0 -11 5 -13 8 -11 12 -12V-8H-12Z" />
          <path fill="#3b78c8" d="M-13 -7H13C14 4 8 11 0 13C-8 11 -14 4 -13 -7Z" />
          <text class="shield" y="7">{{ s[0] }}</text>
        </g>

        <text v-for="(l, i) in labels" :key="i" :class="l[0]" :text-anchor="l[4]">
          <tspan v-for="(line, n) in l[3]" :key="n" :x="l[1]" :y="l[2] + n * (l[0] === 'town' ? 17 : 19)">{{ line }}</tspan>
        </text>

        <g class="route">
          <path v-for="(t, i) in tiles" :key="i" :transform="place(t)" :d="t.route" />
        </g>

        <g v-for="s in stops" :key="s[0]">
          <path class="pin" :d="pin" :transform="`translate(${s[3]} ${s[4]})`" />
        </g>
        <g class="route near">
          <path d="M341 1500L358 1516 388 1522M548 1062L533 1082 519 1104M1108 968L1133 978 1154 968M1267 896L1280 914M1609 680L1629 700 1629 712" />
        </g>
        <g v-for="s in stops" :key="s[0]" :transform="`translate(${s[1]} ${s[2]})`">
          <circle class="halo" r="27" />
          <circle class="badge" r="14" />
          <text class="letter" y="6">{{ s[0] }}</text>
        </g>
        <g transform="translate(2216 889)">
          <circle class="badge" r="14" />
          <text class="letter" y="6">F</text>
          <path class="pin" :d="pin" transform="translate(0 -34)" />
        </g>
      </svg>

      <footer class="fade"></footer>
    </main>
    <div class="dock"></div>
  </div>
</template>

<style>
body {
  margin: 0;
  background: #0d0b0b;
}
</style>

<style scoped>
.desktop {
  display: flex;
  flex-direction: column;
  min-height: 100vh;
  box-sizing: border-box;
  padding: 4px 5px 0 4px;
  background: linear-gradient(#33293a 0 4px, #c4c4c4 4px calc(100% - 16px), #0d0b0b 0);
}

.window {
  flex: 1;
  display: flex;
  flex-direction: column;
  overflow: hidden;
  border-radius: 10px;
  background: #fff;
  box-shadow: 0 0 0 1px #a2a2a2;
}

button {
  padding: 0;
  border: 0;
  background: none;
  font: inherit;
  color: inherit;
}

.titlebar {
  display: flex;
  align-items: center;
  height: 74px;
  padding: 0 28px 0 26px;
  background: #f6f6f6;
  font-family: Inter, Roboto, sans-serif;
  font-size: 26px;
  color: #8c8c8c;
}

.lights {
  display: flex;
  gap: 16px;
}

.light {
  width: 24px;
  height: 24px;
  border: 1px solid;
  border-radius: 50%;
}

.close {
  background: #ed6b5f;
  border-color: #dc5a4e;
}

.minimise {
  background: #f5bf4f;
  border-color: #dda63e;
}

.zoom {
  background: #62c655;
  border-color: #4fae43;
}

.title {
  flex: 1;
  margin: 0;
  padding-left: 10px;
  font-size: 25px;
  font-weight: 400;
  text-align: center;
}

.recorder {
  display: flex;
  align-items: center;
}

.record {
  width: 30px;
  height: 30px;
  margin-right: 14px;
}

.chevron {
  width: 16px;
  height: 10px;
  margin-left: 16px;
}

.back-row {
  display: flex;
  align-items: center;
  gap: 24px;
  padding: 29px 29px 0;
}

.back {
  display: grid;
  place-items: center;
  width: 56px;
  height: 56px;
  border: 2px solid #e9e9ec;
  border-radius: 6px;
}

.back svg {
  width: 14px;
  height: 22px;
}

.back-label {
  padding-bottom: 2px;
  font-family: 'Noto Sans CJK JP', 'Noto Sans', sans-serif;
  font-size: 28px;
  font-weight: 900;
  line-height: 40px;
  color: #000;
}

.actions {
  display: grid;
  grid-template-columns: 1fr auto 1fr;
  align-items: start;
  padding: 89px 114px 66px;
}

.add-rider {
  justify-self: start;
  margin-top: 15px;
}

.add-rider svg {
  display: block;
  width: 233px;
  height: 206px;
}

.start {
  min-width: 611px;
  padding: 76px 90px 95px;
  border-radius: 6px;
  background: #73d780;
  font-family: 'Noto Sans CJK JP', 'Noto Sans', sans-serif;
  font-size: 72px;
  font-weight: 900;
  line-height: 100px;
  color: #fff;
}

.map {
  display: block;
  width: 76.6%;
  margin: 0 auto;
  font-family: Roboto, sans-serif;
}

.map path {
  vector-effect: non-scaling-stroke;
}

.park {
  fill: #cbe0ab;
}

.base {
  fill: #dfdad4;
}

.pale {
  fill: #dce5d6;
}

.lake {
  fill: #90b7fb;
}

.river,
.minor,
.road,
.highway,
.border,
.route {
  fill: none;
  stroke-linejoin: round;
}

.river {
  stroke: #a3c2fa;
  stroke-width: 2;
  stroke-dasharray: 12 3;
}

.minor {
  stroke: #d3d0ca;
  stroke-width: 2;
}

.road {
  stroke: #e9c062;
  stroke-width: 2;
}

.highway {
  stroke: #fba43c;
  stroke-width: 3;
}

.border {
  stroke: #b9b7b4;
  stroke-width: 2;
  stroke-dasharray: 14 6;
}

.route {
  stroke: #1467ff;
  stroke-width: 9;
  stroke-linecap: round;
}

.near {
  stroke: #4f8dfb;
  stroke-linecap: butt;
}

.dot {
  fill: #fff;
  stroke: #555;
  stroke-width: 2;
}

.poi {
  fill: #fff;
  stroke: #a9b79a;
  stroke-width: 1;
}

.nature,
.town,
.city,
.metro,
.state {
  paint-order: stroke;
  stroke: rgba(255, 255, 255, 0.6);
  stroke-width: 3px;
  stroke-linejoin: round;
}

.nature {
  font-size: 18px;
  font-style: italic;
  fill: #356035;
}

.town {
  font-size: 18px;
  fill: #444;
}

.city {
  font-size: 20px;
  fill: #383838;
}

.metro {
  font-size: 23px;
  fill: #2c2c2c;
}

.state {
  font-size: 28px;
  font-weight: 500;
  letter-spacing: 6px;
  fill: #a3987f;
}

.shield {
  font-size: 15px;
  font-weight: 700;
  text-anchor: middle;
  fill: #fff;
}

.pin {
  fill: #dc4437;
  stroke: #24110f;
  stroke-width: 2;
}

.halo {
  fill: rgba(255, 255, 255, 0.35);
  stroke: #fff;
  stroke-width: 5;
}

.badge {
  fill: #1467ff;
}

.letter {
  font-size: 18px;
  font-weight: 700;
  text-anchor: middle;
  fill: #fff;
}

.fade {
  flex: 1;
  min-height: 40px;
  background:
    linear-gradient(to right, transparent 96%, #fff 99%),
    linear-gradient(#fff, #ececec);
}

.dock {
  height: 11px;
  margin: 0 83px 0 -4px;
  box-sizing: border-box;
  border-top: 3px solid #4b4b4b;
  border-top-right-radius: 10px;
  background: #2d2c2c;
}
</style>
